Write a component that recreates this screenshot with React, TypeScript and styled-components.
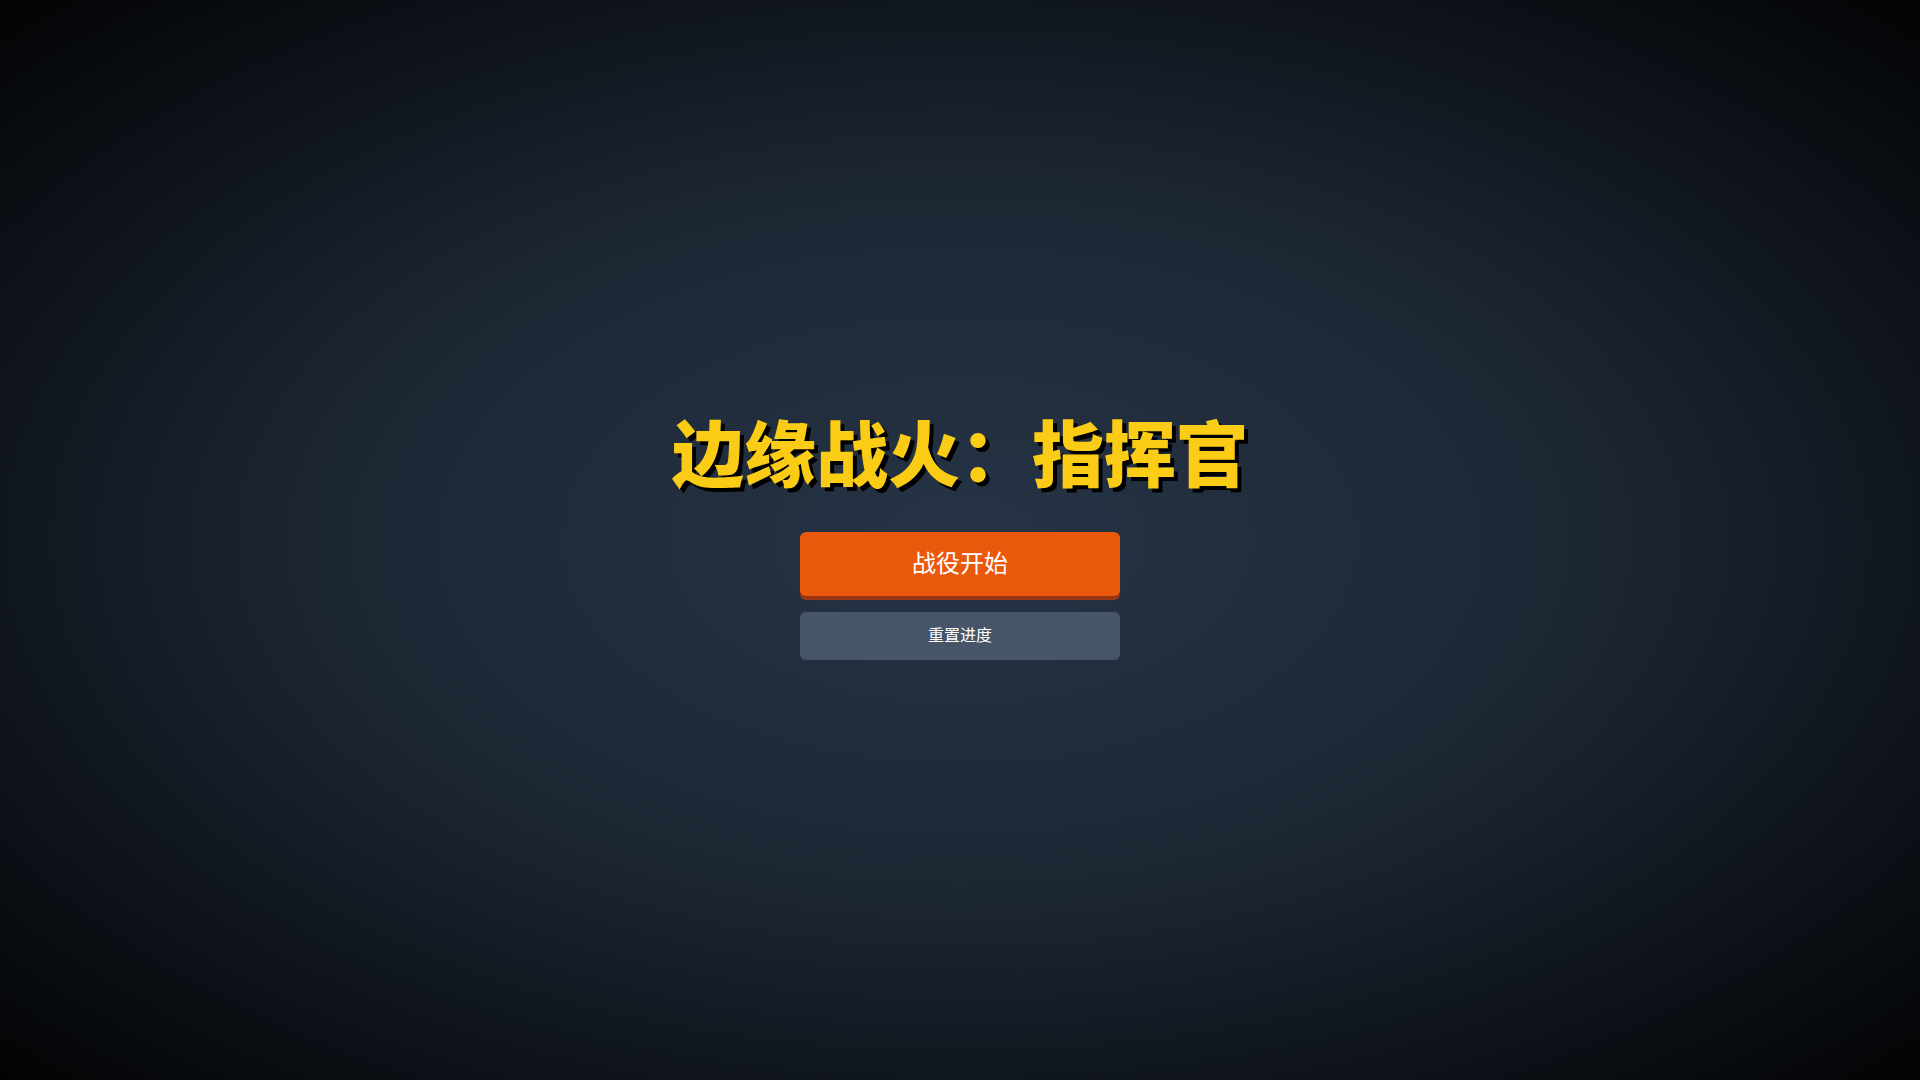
import React, { FC } from 'react';
import styled, { createGlobalStyle } from 'styled-components';

const GlobalStyle = createGlobalStyle`
	html,
	body {
		margin: 0;
		padding: 0;
		height: 100%;
	}
	body {
		font-family: 'Noto Sans CJK SC', 'Noto Sans', sans-serif;
		background: #000;
	}
	#root {
		height: 100%;
	}
`;

const App: FC = () => (
	<>
		<GlobalStyle />
		<Screen>
			<Menu>
				<Title>边缘战火：指挥官</Title>
				<ButtonList>
					<StartButton type="button">战役开始</StartButton>
					<ResetButton type="button">重置进度</ResetButton>
				</ButtonList>
			</Menu>
		</Screen>
	</>
);

const Screen = styled.div`
	width: 100vw;
	height: 100vh;
	display: flex;
	align-items: center;
	justify-content: center;
	background: radial-gradient(ellipse at center, #263446 0%, #1d2734 45%, #0c1016 80%, #020304 100%);
	overflow: hidden;
`;

const Menu = styled.div`
	display: flex;
	flex-direction: column;
	align-items: center;
`;

const Title = styled.h1`
	margin: 0 0 52px;
	font-size: 72px;
	line-height: 60px;
	font-weight: 900;
	color: #facc15;
	text-shadow: 4px 4px 0 #000;
	white-space: nowrap;
`;

const ButtonList = styled.div`
	display: flex;
	flex-direction: column;
	gap: 16px;
	width: 320px;
`;

const BaseButton = styled.button`
	width: 100%;
	border: none;
	border-radius: 6px;
	color: #fff;
	font-family: 'Noto Sans CJK SC', 'Noto Sans', sans-serif;
	cursor: pointer;
`;

const StartButton = styled(BaseButton)`
	padding: 14px 0 18px;
	font-size: 24px;
	line-height: 32px;
	background: #ea580c;
	box-shadow: 0 4px 0 #9a3412;
`;

const ResetButton = styled(BaseButton)`
	padding: 10px 0 14px;
	font-size: 16px;
	line-height: 24px;
	background: #475569;
`;

export default App;
